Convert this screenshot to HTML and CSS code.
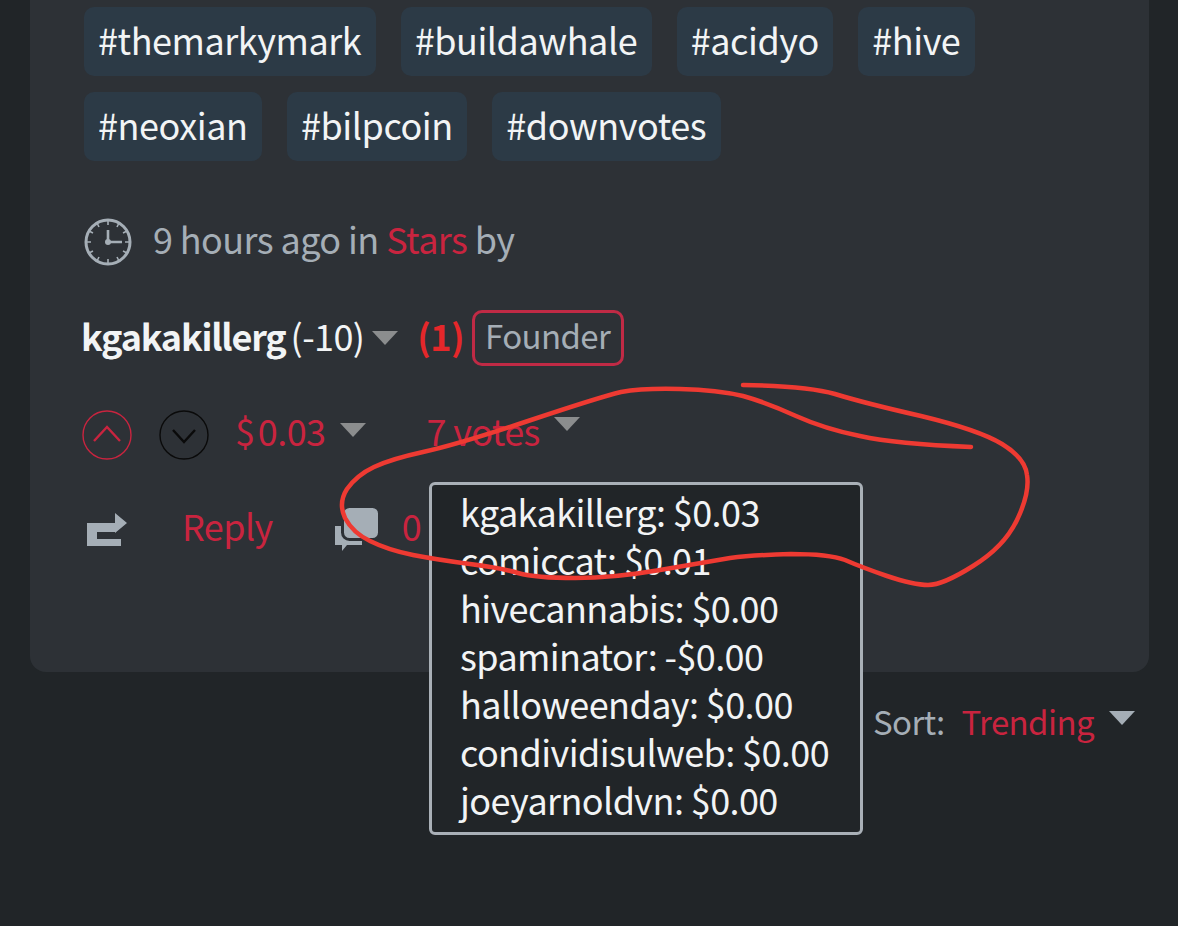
FILE: index.html
```html
<!DOCTYPE html>
<html>
<head>
  <meta charset="UTF-8">
  <title>Post footer</title>
  <link rel="stylesheet" href="styles.css">
</head>
<body>
  <div class="card">
    <div class="tags">
      <a class="tag">#themarkymark</a>
      <a class="tag">#buildawhale</a>
      <a class="tag">#acidyo</a>
      <a class="tag">#hive</a>
      <a class="tag">#neoxian</a>
      <a class="tag">#bilpcoin</a>
      <a class="tag">#downvotes</a>
    </div>

    <div class="meta">
      <svg class="clock" viewBox="0 0 48 48" width="48" height="48">
        <circle cx="24" cy="24" r="22" fill="none" stroke="#a5aeb6" stroke-width="3"/>
        <path d="M24 2v5M24 41v5M2 24h5M41 24h5M13 5l2 4M35 5l-2 4M5 13l4 2M43 13l-4 2M5 35l4-2M43 35l-4-2M13 43l2-4M35 43l-2-4" stroke="#a5aeb6" stroke-width="1.6"/>
        <path d="M24 12v12h14" fill="none" stroke="#a5aeb6" stroke-width="2.6"/>
        <circle cx="24" cy="24" r="3" fill="#a5aeb6"/>
      </svg>
      <span class="meta-text">9 hours ago in <a class="link">Stars</a> by</span>
    </div>

    <div class="author">
      <strong class="name">kgakakillerg</strong>
      <span class="rep">(-10)</span>
      <span class="caret"></span>
      <strong class="flag">(1)</strong>
      <span class="badge">Founder</span>
    </div>

    <div class="votes">
      <svg class="circle-btn" viewBox="0 0 50 50" width="50" height="50">
        <circle cx="25" cy="25" r="24" fill="none" stroke="#c9243f" stroke-width="1.4"/>
        <path d="M12 31L25 17 38 31" fill="none" stroke="#c9243f" stroke-width="2.4"/>
      </svg>
      <svg class="circle-btn" viewBox="0 0 50 50" width="50" height="50">
        <circle cx="25" cy="25" r="24" fill="none" stroke="#0a0a0a" stroke-width="1.4"/>
        <path d="M14 20L25 32 36 20" fill="none" stroke="#0a0a0a" stroke-width="2.4"/>
      </svg>
      <a class="link payout">$ 0.03</a>
      <span class="caret caret-lg"></span>
      <a class="link count">7 votes</a>
      <span class="caret caret-lg caret-up"></span>
    </div>

    <div class="actions">
      <svg class="reblog" viewBox="0 0 40 34" width="40" height="34">
        <path d="M0 10H28V0L40 10 28 20V19H10V26H34V33H0Z" fill="#a5aeb6"/>
      </svg>
      <a class="link reply">Reply</a>
      <svg class="comment" viewBox="0 0 45 44" width="45" height="44">
        <path d="M1 18H28V37H13L8 43V37H1Z" fill="#a5aeb6"/>
        <rect x="8.5" y="-1.5" width="37" height="33" rx="7" fill="#a5aeb6" stroke="#2d3136" stroke-width="3"/>
      </svg>
      <a class="link comment-count">0</a>
    </div>
  </div>

  <div class="sort">
    <span class="sort-text">Sort:</span>
    <a class="link sort-text">Trending</a>
    <span class="caret caret-sort"></span>
  </div>

  <div class="vote-list">
    <div>kgakakillerg: $0.03</div>
    <div>comiccat: $0.01</div>
    <div>hivecannabis: $0.00</div>
    <div>spaminator: -$0.00</div>
    <div>halloweenday: $0.00</div>
    <div>condividisulweb: $0.00</div>
    <div>joeyarnoldvn: $0.00</div>
  </div>

  <!-- hand drawn circle on top of the screenshot -->
  <svg class="scribble" viewBox="0 0 1178 926" width="1178" height="926">
    <path d="M971 447Q896 444 860 436Q825 429 796 416Q768 403 743 396Q718 390 680 389Q643 388 621 392Q600 397 528 421Q456 445 423 452Q391 459 374 467Q357 475 347 489Q338 503 345 518Q353 533 370 541Q388 550 413 555Q439 560 470 564Q501 568 518 573Q536 578 575 578Q614 578 660 570Q707 562 730 558Q754 555 791 554Q829 554 845 560Q861 567 887 576Q914 585 928 585Q943 585 973 566Q1004 547 1017 520Q1030 493 1027 475Q1025 458 1002 444Q979 430 921 416Q864 403 835 394Q807 386 743 385" fill="none" stroke="#ee3a32" stroke-width="4.5" stroke-linecap="round"/>
  </svg>
</body>
</html>
```

FILE: styles.css
```css
html, body {
  height: 100%;
}
body {
  margin: 0;
  height: 926px;
  overflow: hidden;
  position: relative;
  background-color: #212528;
  color: #a5aeb6;
  font-family: "Noto Sans CJK JP", "Noto Sans", sans-serif;
  font-size: 36px;
  line-height: 48px;
  letter-spacing: -0.6px;
}
a {
  text-decoration: none;
}
.link {
  color: #c9243f;
}
.card {
  box-sizing: border-box;
  height: 672px;
  margin: 0 29px 0 30px;
  padding: 7px 54px 0;
  background-color: #2d3136;
  border-radius: 0 0 16px 16px;
}
.tags {
  display: flex;
  flex-wrap: wrap;
  gap: 16px 25px;
}
.tag {
  display: block;
  height: 69px;
  line-height: 64px;
  padding: 0 14.5px 0 14px;
  background-color: #2c3a46;
  border-radius: 10px;
  color: #f2f4f5;
  letter-spacing: -0.45px;
}
.meta {
  display: flex;
  align-items: center;
  gap: 21px;
  height: 48px;
  margin-top: 57px;
}
.meta-text {
  margin-bottom: 8px;
}
.author {
  display: flex;
  align-items: center;
  margin-top: 44px;
  margin-left: -3px;
  color: #f2f4f5;
}
.name {
  font-weight: 700;
  letter-spacing: -1.2px;
  margin-bottom: 6px;
}
.rep {
  margin-left: 5px;
  margin-bottom: 6px;
}
.caret {
  width: 0;
  height: 0;
  margin-left: 8px;
  border-left: 13px solid transparent;
  border-right: 13px solid transparent;
  border-top: 14px solid #8b8d8e;
}
.flag {
  margin-left: 19px;
  margin-bottom: 6px;
  color: #e5272a;
}
.badge {
  box-sizing: border-box;
  height: 56px;
  line-height: 45px;
  margin-left: 8px;
  padding: 0 11px 0 10px;
  border: 3px solid #c02a45;
  border-radius: 10px;
  color: #a5aeb6;
  font-size: 33px;
}
.votes {
  display: flex;
  align-items: center;
  height: 50px;
  margin-top: 44px;
  margin-left: -2px;
}
.circle-btn + .circle-btn {
  margin-left: 27px;
}
.payout {
  margin-left: 26px;
  margin-bottom: 10px;
  word-spacing: -4px;
}
.caret-lg {
  margin-left: 15px;
  margin-bottom: 10px;
}
.count {
  margin-left: 60px;
  margin-bottom: 10px;
}
.caret-up {
  margin-left: 14px;
  margin-bottom: 22px;
}
.actions {
  display: flex;
  align-items: center;
  height: 48px;
  margin-top: 46px;
}
.reblog {
  margin-left: 3px;
}
.reply {
  margin-left: 55px;
  margin-bottom: 10px;
}
.comment {
  margin-left: 61px;
}
.comment-count {
  margin-left: 23px;
  margin-bottom: 10px;
}
.sort {
  display: flex;
  align-items: center;
  justify-content: flex-end;
  gap: 17px;
  margin: 25px 43px 0 0;
}
.sort-text {
  font-size: 33px;
}
.caret-sort {
  margin-left: -2px;
  margin-bottom: 6px;
  border-top-color: #a5aeb6;
}
.vote-list {
  position: absolute;
  left: 429px;
  top: 482px;
  width: 434px;
  height: 353px;
  box-sizing: border-box;
  padding: 2px 0 0 28px;
  background-color: #212528;
  border: 3px solid #a9b0b7;
  border-radius: 6px;
  color: #f2f4f5;
}
.scribble {
  position: absolute;
  left: 0;
  top: 0;
  pointer-events: none;
}
```
